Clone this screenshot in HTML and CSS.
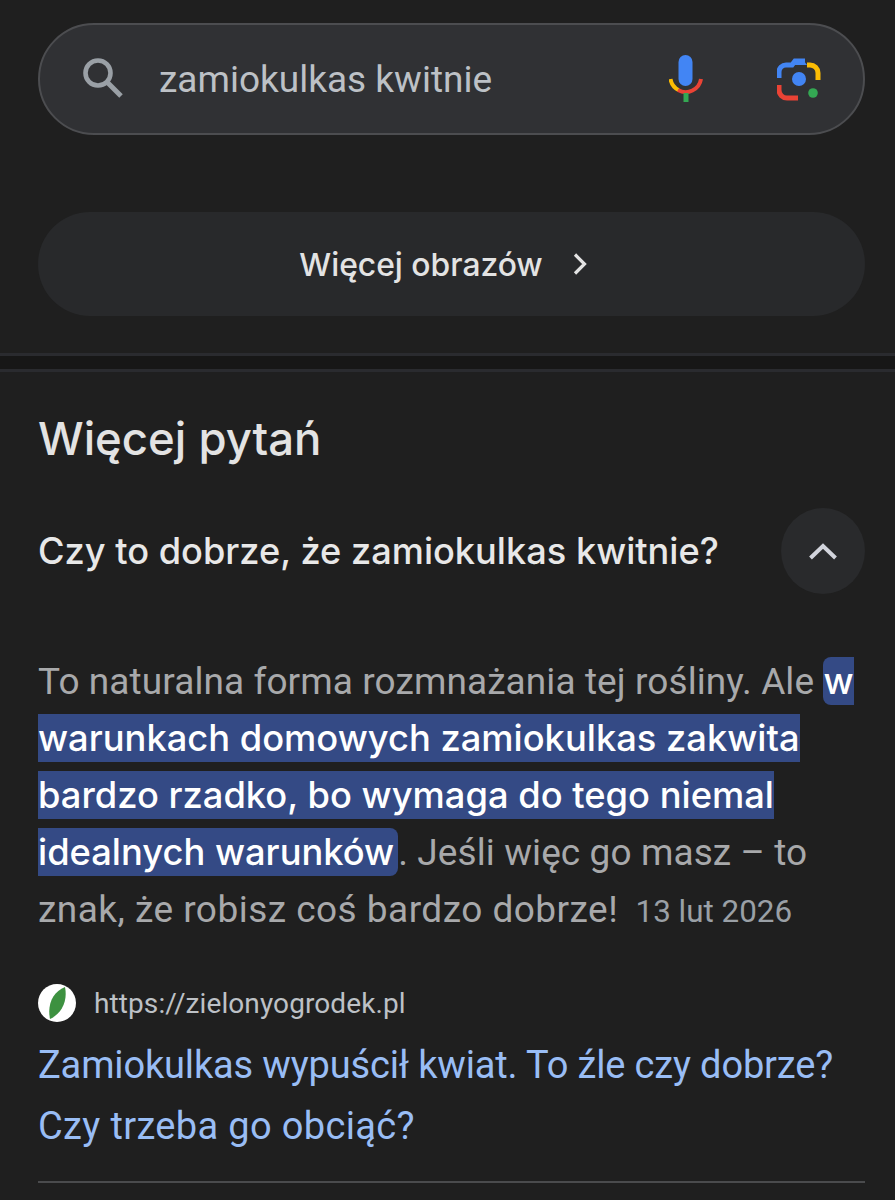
FILE: index.html
```html
<!DOCTYPE html>
<html lang="pl">
<head>
<meta charset="utf-8">
<title>zamiokulkas kwitnie</title>
<link rel="stylesheet" href="styles.css">
</head>
<body>
<header class="top">
  <div class="search">
    <svg class="ico-search" viewBox="0 0 44 44" width="44" height="44"><circle cx="17" cy="17" r="12.5" fill="none" stroke="#9aa0a6" stroke-width="4.6"/><path d="M26.5 26.5L40 40" stroke="#9aa0a6" stroke-width="5" fill="none"/></svg>
    <span class="query">zamiokulkas kwitnie</span>
    <svg class="ico-mic" viewBox="0 0 34 48" width="34" height="48">
      <rect x="9.5" y="0" width="14" height="31" rx="7" fill="#4285f4"/>
      <path d="M1.5 24a15.500 15.500 0 0 0 8 11" fill="none" stroke="#fbbc04" stroke-width="4"/>
      <path d="M9 35a15.500 15.500 0 0 0 23-11" fill="none" stroke="#ea4335" stroke-width="4"/>
      <rect x="14.500" y="38" width="5" height="9" fill="#34a853"/>
    </svg>
    <svg class="ico-lens" viewBox="0 0 44 44" width="44" height="44">
      <path d="M2 21v-6a7 7 0 0 1 7-7h6l3-4h10" fill="none" stroke="#4285f4" stroke-width="5"/>
      <path d="M15 8l3-4h9l3 4z" fill="#4285f4"/>
      <path d="M30 8h3a8 8 0 0 1 8 8v7" fill="none" stroke="#fbbc04" stroke-width="5"/>
      <path d="M2 28v5a8 8 0 0 0 8 8h11" fill="none" stroke="#ea4335" stroke-width="5"/>
      <circle cx="22" cy="22" r="7" fill="#4285f4"/>
      <circle cx="36" cy="36" r="4.800" fill="#34a853"/>
    </svg>
  </div>
  <div class="more">
    <span class="more-label">Więcej obrazów</span>
    <svg class="ico-chev" viewBox="0 0 16 24" width="16" height="24"><path d="M3 2.500L12.500 12 3 21.500" fill="none" stroke="#e3e3e3" stroke-width="3.200"/></svg>
  </div>
</header>
<div class="band"></div>
<main class="paa">
  <h2 class="title">Więcej pytań</h2>
  <div class="question">
    <span class="q-text">Czy to dobrze, że zamiokulkas kwitnie?</span>
    <span class="toggle"><svg viewBox="0 0 30 20" width="30" height="20"><path d="M2.500 17L15 5 27.500 17" fill="none" stroke="#d2d4dc" stroke-width="4"/></svg></span>
  </div>
  <p class="answer">To naturalna forma rozmnażania tej rośliny. Ale <mark class="hl">w<br>warunkach domowych zamiokulkas zakwita<br>bardzo rzadko, bo wymaga do tego niemal<br>idealnych warunków</mark>. Jeśli więc go masz – to<br><span class="tail">znak, że robisz coś bardzo dobrze!</span> <span class="date">13 lut 2026</span></p>
  <div class="source">
    <svg class="favicon" viewBox="0 0 38 38" width="38" height="38"><circle cx="19" cy="19" r="19" fill="#fff"/><path d="M27 3C15 8 9 20 12 35 23 30 30 18 27 3z" fill="#3d9140"/></svg>
    <span class="url">https://zielonyogrodek.pl</span>
  </div>
  <a class="link" href="#">Zamiokulkas wypuścił kwiat. To źle czy dobrze?<br><span class="link-second">Czy trzeba go obciąć?</span></a>
  <div class="rule"></div>
</main>
</body>
</html>
```
FILE: styles.css
```css
html, body {
  margin: 0;
  padding: 0;
  background: #1f1f1f;
  height: 1200px;
  overflow: hidden;
  font-family: "Roboto", "Liberation Sans", sans-serif;
}
.top {
  padding: 23px 30px 0 38px;
  height: 353px;
  box-sizing: border-box;
}
.search {
  height: 112px;
  box-sizing: border-box;
  border: 2px solid #4c4d50;
  border-radius: 56px;
  background: #303134;
  display: flex;
  align-items: center;
  padding-left: 41px;
}
.ico-search { flex: none; margin-top: -2px; }
.query {
  margin-left: 34px;
  font-size: 37px;
  color: #bdc1c6;
  width: 502px;
  flex: none;
}
.ico-mic { flex: none; margin-left: 8px; }
.ico-lens { flex: none; margin-left: 74px; }
.more {
  margin-top: 77px;
  height: 104px;
  padding-right: 16px;
  border-radius: 52px;
  background: #28292b;
  display: flex;
  align-items: center;
  justify-content: center;
  gap: 29px;
}
.more-label {
  font-family: "Inter", sans-serif;
  font-size: 31.8px;
  font-weight: 500;
  color: #e3e3e3;
}
.band {
  height: 13px;
  background: #171717;
  border-top: 3px solid #2a2b2f;
  border-bottom: 3px solid #2a2b2f;
}
.paa { padding: 0 30px 0 38px; }
.title {
  margin: 40px 0 0;
  font-family: "Inter", sans-serif;
  font-size: 45.500px;
  line-height: 54px;
  font-weight: 500;
  color: #e3e3e3;
}
.question {
  margin-top: 42px;
  display: flex;
  align-items: center;
  justify-content: space-between;
}
.q-text {
  font-family: "Inter", sans-serif;
  font-size: 36.200px;
  font-weight: 500;
  color: #e8e8e8;
}
.toggle {
  width: 84px;
  height: 86px;
  border-radius: 50%;
  background: #292a2c;
  display: flex;
  align-items: center;
  justify-content: center;
}
.answer {
  margin: 59px -20px 0 0;
  font-size: 37px;
  letter-spacing: 0.09px;
  line-height: 57px;
  color: #a8a9ab;
  white-space: nowrap;
}
.hl {
  font-family: "Inter", sans-serif;
  font-size: 36.300px;
  letter-spacing: 0;
  background: #344a85;
  color: #fff;
  font-weight: 500;
  padding: 2px 4px 2px 0;
  border-radius: 8px;
}
.tail { letter-spacing: 0.47px; }
.date {
  margin-left: 8px;
  font-size: 31.400px;
  letter-spacing: 0;
  color: #9aa0a6;
}
.source {
  margin-top: 44px;
  display: flex;
  align-items: center;
  gap: 18px;
}
.favicon { flex: none; }
.url {
  font-size: 28px;
  letter-spacing: 0.1px;
  color: #bdc1c6;
}
.link {
  display: block;
  margin-top: 13px;
  font-size: 38px;
  letter-spacing: -0.15px;
  line-height: 61px;
  color: #99bdf5;
  text-decoration: none;
  white-space: nowrap;
}
.link-second { letter-spacing: 0.35px; }
.rule {
  margin-top: 24px;
  height: 2px;
  background: #4a4b4d;
}
```
